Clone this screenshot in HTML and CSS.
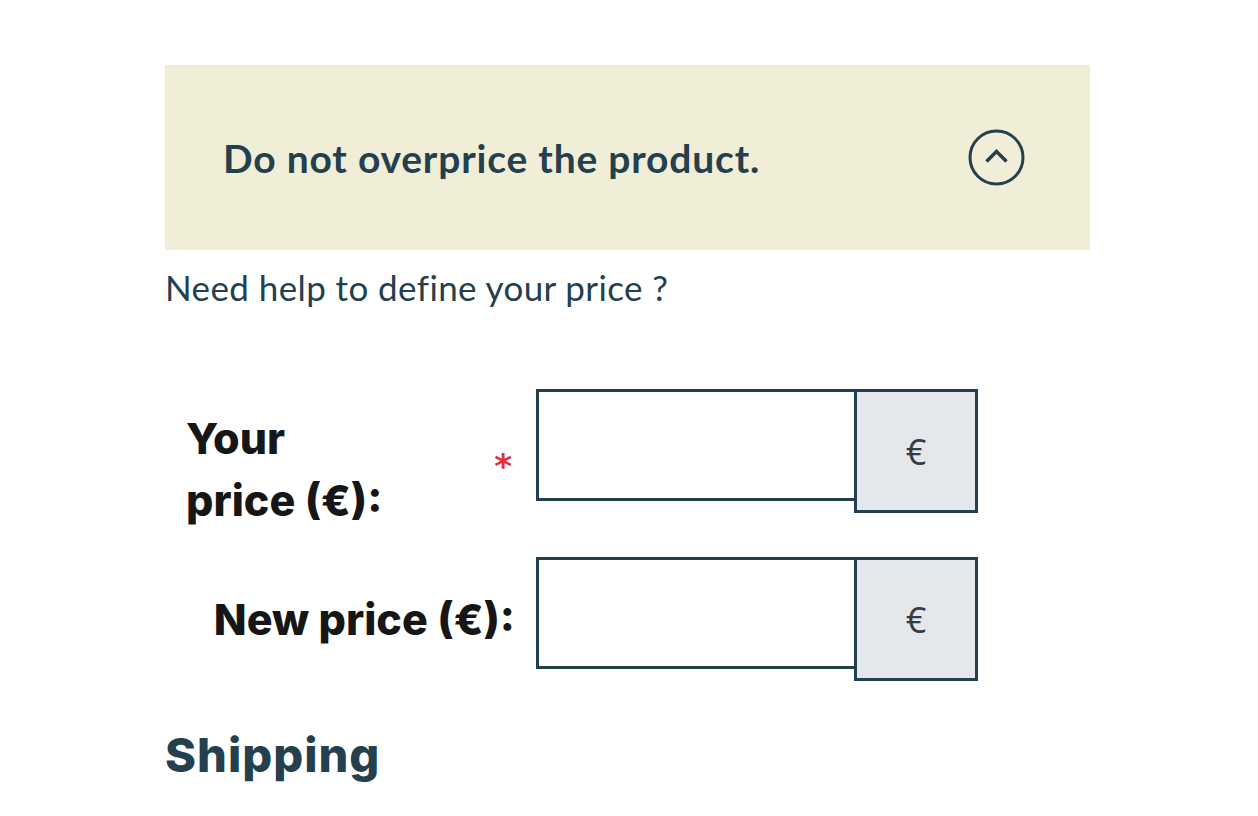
FILE: index.html
```html
<!DOCTYPE html>
<html lang="en">
<head>
<meta charset="utf-8">
<title>Price</title>
<link rel="stylesheet" href="styles.css">
</head>
<body>
<main class="page">
  <section class="notice">
    <h2 class="notice-title">Do not overprice the product.</h2>
    <button class="notice-toggle" type="button" aria-label="Collapse">
      <svg width="57" height="57" viewBox="0 0 57 57" aria-hidden="true">
        <circle cx="28.5" cy="28.5" r="26.5" fill="none" stroke="#243f4d" stroke-width="3"/>
        <path d="M18.5 32.5 L28.5 22.5 L38.5 32.5" fill="none" stroke="#243f4d" stroke-width="3.5"/>
      </svg>
    </button>
  </section>
  <p class="help">Need help to define your price ?</p>

  <form class="price-form">
    <div class="row">
      <div class="label-col label-col--required">
        <label class="label label--wrap" for="price">Your price&nbsp;(€):</label>
        <span class="required">*</span>
      </div>
      <div class="group">
        <input class="field" id="price" type="text">
        <span class="addon">€</span>
      </div>
    </div>
    <div class="row">
      <div class="label-col">
        <label class="label" for="newprice">New price (€):</label>
      </div>
      <div class="group">
        <input class="field" id="newprice" type="text">
        <span class="addon">€</span>
      </div>
    </div>
  </form>

  <h2 class="section-title">Shipping</h2>
</main>
</body>
</html>
```

FILE: styles.css
```css
html, body {
  margin: 0;
  padding: 0;
  background: #ffffff;
}

.page {
  width: 925px;
  margin-left: 165px;
  padding-top: 65px;
  font-family: Lato, "Liberation Sans", sans-serif;
  color: #243f4d;
}

.notice {
  height: 185px;
  box-sizing: border-box;
  background: #f1eed8;
  display: flex;
  align-items: center;
  justify-content: space-between;
  padding: 0 65px 0 58px;
}

.notice-title {
  margin: 0;
  font-size: 39px;
  font-weight: 700;
  letter-spacing: 0.8px;
  color: #243f4d;
}

.notice-toggle {
  border: 0;
  padding: 0;
  background: none;
  width: 57px;
  height: 57px;
  display: block;
}

.notice-toggle svg {
  display: block;
}

.help {
  margin: 16px 0 0;
  font-size: 35px;
  line-height: 42px;
  letter-spacing: 0.4px;
  color: #243f4d;
}

.price-form {
  margin-top: 81px;
  display: flex;
  flex-direction: column;
  gap: 44px;
}

.row {
  display: flex;
  align-items: center;
}

.label-col {
  width: 371px;
  box-sizing: border-box;
  padding-right: 21px;
  display: flex;
  align-items: center;
  justify-content: flex-end;
}

.label-col--required {
  padding-left: 21px;
  padding-right: 24px;
  justify-content: space-between;
}

.label {
  font-family: "Inter", "Liberation Sans", sans-serif;
  font-weight: 800;
  font-size: 43px;
  line-height: 62px;
  color: #161616;
  letter-spacing: 0;
}

.label--wrap {
  width: 240px;
  margin-top: 18px;
  margin-bottom: -18px;
}

.required {
  color: #e0313f;
  font-family: "DejaVu Sans", sans-serif;
  font-weight: 700;
  font-size: 34px;
  line-height: 1;
  margin-top: 30px;
}

.group {
  display: flex;
  align-items: flex-start;
}

.field {
  width: 320px;
  height: 112px;
  box-sizing: border-box;
  border: 3px solid #243f4d;
  border-right: 0;
  margin: 0;
  padding: 0 16px;
  background: #ffffff;
  font-size: 30px;
}

.addon {
  width: 124px;
  height: 124px;
  box-sizing: border-box;
  margin-left: -2px;
  border: 3px solid #243f4d;
  background: #e4e7ec;
  display: flex;
  align-items: center;
  justify-content: center;
  font-family: "Open Sans", sans-serif;
  font-size: 36px;
  color: #363c42;
}

.section-title {
  margin: 43px 0 0;
  font-family: "Inter", "Liberation Sans", sans-serif;
  font-weight: 800;
  font-size: 47px;
  line-height: 62px;
  letter-spacing: 1px;
  color: #243f4d;
}
```
